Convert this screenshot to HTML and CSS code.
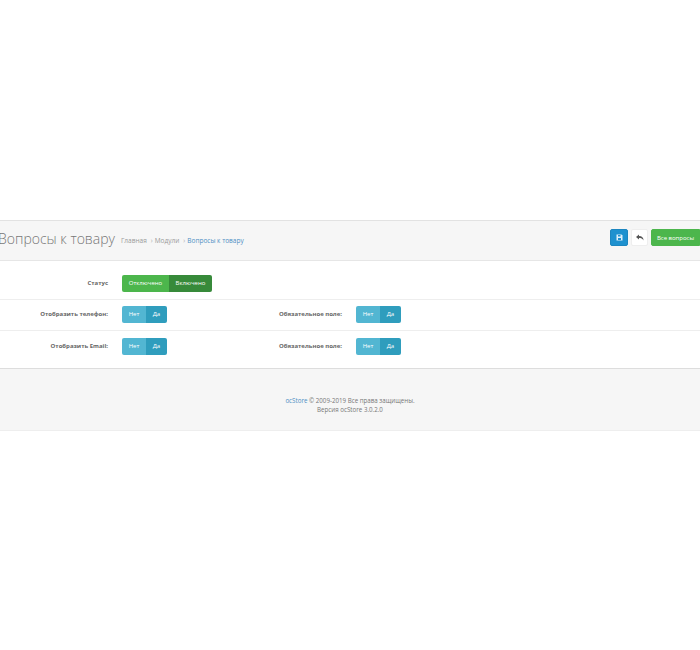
FILE: index.html
```html
<!DOCTYPE html>
<html lang="ru">
<head>
<meta charset="utf-8">
<title>Вопросы к товару</title>
<link rel="stylesheet" href="styles.css">
</head>
<body>
<div class="page">
  <header class="head">
    <h1 class="title">Вопросы к товару</h1>
    <nav class="crumbs">
      <span>Главная</span><i>›</i><span>Модули</span><i>›</i><a class="link">Вопросы к товару</a>
    </nav>
    <div class="actions">
      <span class="btn btn-save"><svg width="7" height="7" viewBox="0 0 14 14"><path fill="#dff0fa" d="M1 1h10l2 2v10H1z"/><path fill="#1e91cf" d="M4 2h5v3H4zM4 8h6v4H4z"/></svg></span>
      <span class="btn btn-back"><svg width="8" height="7" viewBox="0 0 16 14"><path fill="#555" d="M6 1 0 6l6 5V8c4 0 7 1 9 5 0-6-3-9-9-9z"/></svg></span>
      <span class="btn btn-all">Все вопросы</span>
    </div>
  </header>
  <main class="form">
    <div class="row row-status">
      <div class="label">Статус</div>
      <div class="toggle green"><span class="off">Отключено</span><span class="on">Включено</span></div>
    </div>
    <div class="row row-mid">
      <div class="label">Отобразить телефон:</div>
      <div class="toggle blue"><span class="off">Нет</span><span class="on">Да</span></div>
      <div class="label label-2">Обязательное поле:</div>
      <div class="toggle blue"><span class="off">Нет</span><span class="on">Да</span></div>
    </div>
    <div class="row row-last">
      <div class="label">Отобразить Email:</div>
      <div class="toggle blue"><span class="off">Нет</span><span class="on">Да</span></div>
      <div class="label label-2">Обязательное поле:</div>
      <div class="toggle blue"><span class="off">Нет</span><span class="on">Да</span></div>
    </div>
  </main>
  <footer class="foot">
    <div><a class="link">ocStore</a> © 2009-2019 Все права защищены.</div>
    <div>Версия ocStore 3.0.2.0</div>
  </footer>
</div>
</body>
</html>
```
FILE: styles.css
```css
html, body {
  margin: 0;
  background: #fff;
  overflow: hidden;
}
body {
  font-family: "Open Sans", sans-serif;
  color: #666;
}
.page {
  width: 700px;
  height: 650px;
  padding-top: 220px;
  box-sizing: border-box;
  overflow: hidden;
}
.head {
  height: 41px;
  box-sizing: border-box;
  display: flex;
  align-items: center;
  background: #f6f6f6;
  border-top: 1px solid #e2e2e2;
  border-bottom: 1px solid #e6e6e6;
}
.title {
  margin: 0 0 0 -2px;
  padding-bottom: 4px;
  font-size: 14px;
  font-weight: 300;
  color: #777;
  white-space: nowrap;
}
.crumbs {
  margin-left: 6px;
  padding-bottom: 1px;
  display: flex;
  align-items: center;
  font-size: 6.5px;
  color: #999;
  white-space: nowrap;
}
.crumbs i {
  font-style: normal;
  margin: 0 2px 0 4px;
  color: #aaa;
}
.link {
  color: #4d8fc4;
}
.actions {
  margin-left: auto;
  padding-bottom: 6px;
  display: flex;
  gap: 3px;
}
.btn {
  height: 17px;
  box-sizing: border-box;
  display: flex;
  align-items: center;
  justify-content: center;
  border-radius: 2px;
  font-size: 6px;
}
.btn-save {
  width: 18px;
  background: #1e91cf;
  border: 1px solid #1c86c0;
}
.btn-back {
  width: 17px;
  background: #fff;
  border: 1px solid #eee;
}
.btn-all {
  width: 49px;
  background: #4cb64c;
  border: 1px solid #4cb64c;
  color: #fff;
  border-radius: 2px 0 0 2px;
}
.form {
  display: flex;
  flex-direction: column;
}
.row {
  height: 31px;
  display: flex;
  align-items: center;
  border-bottom: 1px solid #eee;
  box-sizing: border-box;
}
.row-status {
  height: 39px;
  padding-top: 6px;
}
.row-mid {
  padding-bottom: 2px;
}
.row-last {
  height: 38px;
  padding-bottom: 7px;
  border-bottom: 1px solid #ddd;
}
.label {
  width: 108px;
  margin-right: 14px;
  text-align: right;
  font-size: 6px;
  font-weight: 700;
  color: #666;
  white-space: nowrap;
}
.label-2 {
  width: 175px;
}
.toggle {
  display: flex;
  height: 17px;
  border-radius: 2px;
  overflow: hidden;
  font-size: 6px;
  color: #fff;
  flex: none;
}
.toggle span {
  display: flex;
  align-items: center;
  justify-content: center;
}
.green .off { width: 47px; background: #4cb64c; }
.green .on { width: 43px; background: #378a3a; }
.blue .off { width: 24px; background: #52b6d2; }
.blue .on { width: 21px; background: #2f9dbd; }
.foot {
  height: 62px;
  box-sizing: border-box;
  padding-top: 27px;
  background: #f6f6f6;
  border-bottom: 1px solid #eee;
  text-align: center;
  font-size: 6.2px;
  line-height: 9px;
  color: #777;
}
```
